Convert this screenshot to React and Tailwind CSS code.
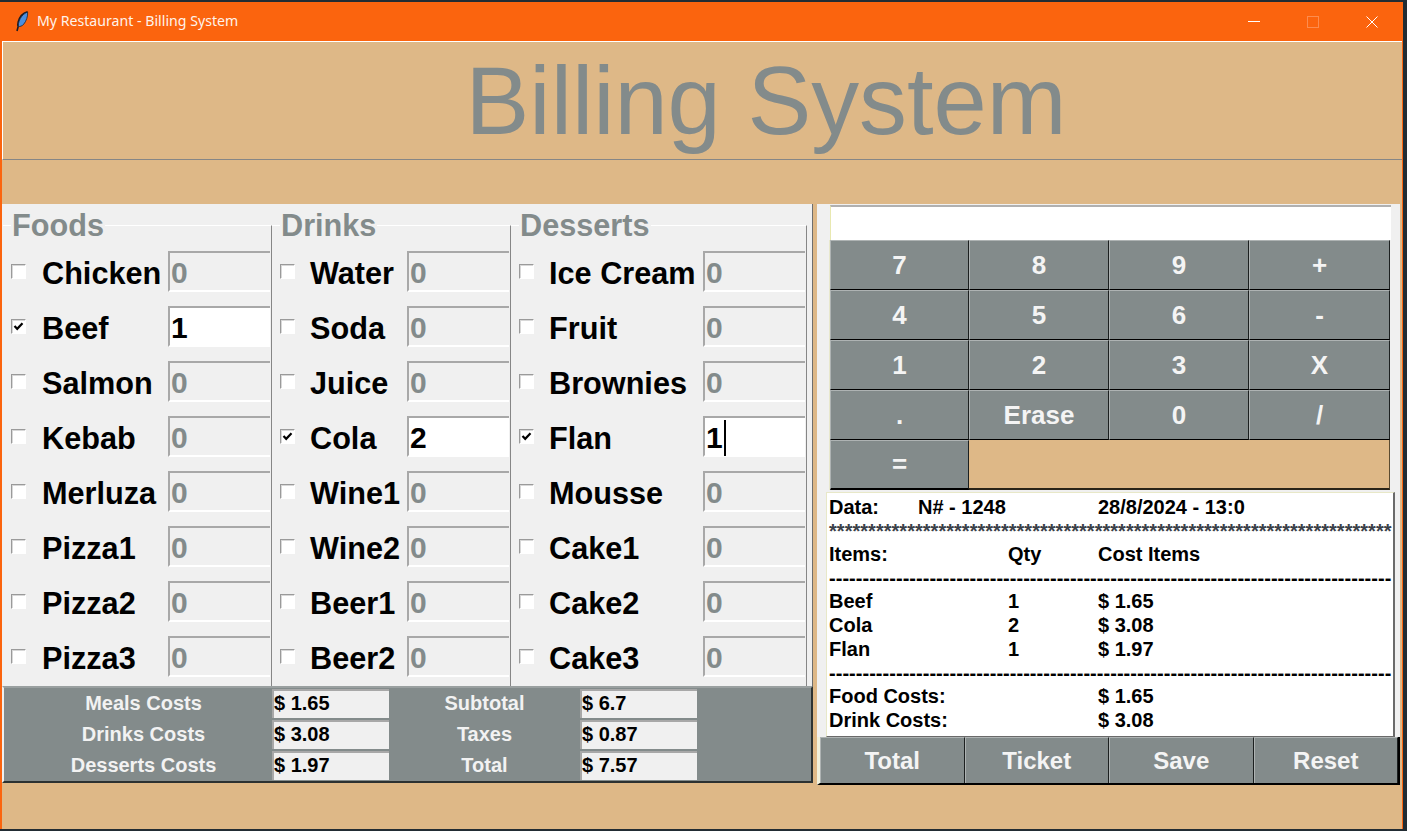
const foods = [["Chicken", ""], ["Beef", "1"], ["Salmon", ""], ["Kebab", ""], ["Merluza", ""], ["Pizza1", ""], ["Pizza2", ""], ["Pizza3", ""]];
const drinks = [["Water", ""], ["Soda", ""], ["Juice", ""], ["Cola", "2"], ["Wine1", ""], ["Wine2", ""], ["Beer1", ""], ["Beer2", ""]];
const desserts = [["Ice Cream", ""], ["Fruit", ""], ["Brownies", ""], ["Flan", "1"], ["Mousse", ""], ["Cake1", ""], ["Cake2", ""], ["Cake3", ""]];
const keys = ["7", "8", "9", "+", "4", "5", "6", "-", "1", "2", "3", "X", ".", "Erase", "0", "/", "="];

function Feather() {
  return (
    <svg width="14" height="21" viewBox="0 0 14 21">
      <path d="M12.5 0.8C8 2 4.5 6 3.2 11C2.7 13 2.8 14.5 3.2 15.5L2 20" fill="none" stroke="#1c1c24" strokeWidth="1.6" />
      <path d="M12.6 1C13 5 11.5 10 8.5 13.5C7 15 5 15.8 3.4 15.4C3 12 4.5 8 7 5C8.6 3.2 10.6 1.8 12.6 1Z" fill="#4a8fe0" stroke="#15233a" strokeWidth="0.8" />
    </svg>
  );
}

function Check({ checked }) {
  return (
    <span className="flex h-[15px] w-[15px] shrink-0 items-center justify-center border border-t-[#9a9a9a] border-l-[#9a9a9a] border-r-white border-b-white bg-white shadow-[inset_1px_1px_0_#d8d8d8]">
      {checked && (
        <svg width="11" height="9" viewBox="0 0 11 9">
          <path d="M1.5 4L4.2 6.8L9.5 1.2" fill="none" stroke="#000" strokeWidth="2.2" />
        </svg>
      )}
    </span>
  );
}

function ItemRow({ name, value, caret, gap }) {
  const on = value !== "";
  return (
    <div className="flex h-[41px] items-center">
      <Check checked={on} />
      <span className={`flex-1 whitespace-nowrap pt-[4px] text-[30.67px] leading-none font-bold text-black ${gap}`}>{name}</span>
      <div className={`mr-px flex h-[41px] w-[102px] items-center border-t-2 border-b-2 border-l-2 border-t-[#a8a8a8] border-b-white border-l-[#a8a8a8] pt-[2px] pl-px text-[30px] leading-none font-bold ${on ? "bg-white text-black" : "bg-[#f0f0f0] text-[#838b8b]"}`}>
        {on ? value : "0"}
        {caret && <span className="ml-px inline-block h-[36px] w-[2px] bg-black" />}
      </div>
    </div>
  );
}

function Group({ title, items, width, gap, caretOn }) {
  return (
    <div className={`mt-[21px] flex flex-col self-stretch border-t border-r border-t-white border-r-[#868686] ${width}`}>
      <div className="mt-[-22px] ml-[8px] w-fit bg-[#f0f0f0] px-px text-[30.67px] leading-[42px] font-bold text-[#838b8b]">{title}</div>
      <div className="flex flex-col gap-[14px] pt-[5px] pl-[8px]">
        {items.map(([name, value]) => (
          <ItemRow key={name} name={name} value={value} gap={gap} caret={name === caretOn} />
        ))}
      </div>
    </div>
  );
}

function CostRow({ label, labelWidth, value }) {
  return (
    <div className="flex items-center">
      <div className={`pb-[2px] text-center text-[20px] leading-none font-bold text-[#f2f2f2] ${labelWidth}`}>{label}</div>
      <div className="flex h-[29px] w-[117px] items-center border-t-2 border-l-2 border-t-[#a8a8a8] border-l-[#a8a8a8] bg-[#f0f0f0] pb-[4px] text-[20px] leading-none font-bold text-black">{value}</div>
    </div>
  );
}

function Key({ label, size, edge }) {
  return (
    <button className={`flex items-center justify-center border-t border-r border-l border-t-[#aeb3b3] border-r-[#1c2020] border-b-black border-l-[#aeb3b3] bg-[#838b8b] font-bold text-[#f4f4f4] ${size} ${edge}`}>
      {label}
    </button>
  );
}

function ReceiptRow({ cols }) {
  return (
    <div className="flex h-[24px] items-center whitespace-nowrap">
      <span className="w-[89px]">{cols[0]}</span>
      <span className="w-[90px]">{cols[1]}</span>
      <span className="w-[90px]">{cols[2]}</span>
      <span>{cols[3]}</span>
    </div>
  );
}

function Filler({ ch, count, tone }) {
  return <div className={`h-[23px] whitespace-nowrap ${tone}`}>{ch.repeat(count)}</div>;
}

export default function App() {
  return (
    <div className="h-[831px] w-[1407px] overflow-hidden bg-[#222c33] pt-[2px] font-['Liberation_Sans',_Arial,_sans-serif]">
      <div className="flex h-[827px] w-[1403px] flex-col border-r border-l-2 border-[#fb640e] bg-[#deb887]">
        <div className="flex h-[39px] shrink-0 items-center bg-[#fb640e] font-['Noto_Sans',_sans-serif] text-[14.15px] text-[#fff3ea]">
          <span className="ml-[13px] flex w-[22px]"><Feather /></span>
          <span className="flex-1 pb-[2px]">My Restaurant - Billing System</span>
          <div className="mr-px flex">
            <div className="flex h-[39px] w-[59px] items-center justify-center">
              <div className="h-px w-[12px] bg-white" />
            </div>
            <div className="flex h-[39px] w-[59px] items-center justify-center">
              <div className="h-[12px] w-[12px] border border-[#fd8c4e]" />
            </div>
            <div className="flex h-[39px] w-[59px] items-center justify-center">
              <svg width="12" height="12" viewBox="0 0 12 12">
                <path d="M0.5 0.5L11.5 11.5M11.5 0.5L0.5 11.5" stroke="#fff" strokeWidth="1" fill="none" />
              </svg>
            </div>
          </div>
        </div>

        <div className="flex h-[119px] shrink-0 items-center justify-center border-t border-b border-l border-t-white border-b-[#868686] border-l-white pl-[127px]">
          <h1 className="text-[95.7px] leading-none font-normal text-[#838b8b]">Billing System</h1>
        </div>

        <div className="mt-[44px] flex items-start">
          <div className="flex w-[811px] shrink-0 flex-col">
            <div className="flex h-[482px] border-r border-r-[#6e6e6e] bg-[#f0f0f0] pl-px">
              <Group title="Foods" items={foods} width="w-[269px]" gap="ml-[16px]" />
              <Group title="Drinks" items={drinks} width="w-[239px]" gap="ml-[15px]" />
              <Group title="Desserts" items={desserts} width="w-[296px]" gap="ml-[15px]" caretOn="Flan" />
            </div>
            <div className="flex h-[97px] border-t-2 border-r-2 border-b-2 border-l-2 border-t-[#9aa0a0] border-r-[#2c3232] border-b-[#2c3232] border-l-[#f0f0f0] bg-[#838b8b] pt-px">
              <div className="flex flex-col gap-[2px] pl-[11px]">
                <CostRow label="Meals Costs" labelWidth="w-[257px]" value="$ 1.65" />
                <CostRow label="Drinks Costs" labelWidth="w-[257px]" value="$ 3.08" />
                <CostRow label="Desserts Costs" labelWidth="w-[257px]" value="$ 1.97" />
              </div>
              <div className="flex flex-col gap-[2px]">
                <CostRow label="Subtotal" labelWidth="w-[191px]" value="$ 6.7" />
                <CostRow label="Taxes" labelWidth="w-[191px]" value="$ 0.87" />
                <CostRow label="Total" labelWidth="w-[191px]" value="$ 7.57" />
              </div>
            </div>
          </div>

          <div className="ml-[4px] flex w-[583px] shrink-0 flex-col">
            <div className="flex h-[533px] flex-col bg-[#f0f0f0]">
              <div className="ml-[12px] w-[562px] pt-px">
                <div className="ml-px h-[35px] border-t-2 border-l border-t-[#b0b0b0] border-l-[#e8e8b0] bg-white" />
                <div className="grid grid-cols-[139px_140px_140px_141px] grid-rows-[repeat(5,50px)] border-l border-l-[#e8e8cc]">
                  {keys.map((k) => (
                    <Key key={k} label={k} size="text-[26px]" edge={k === "=" ? "border-b-2" : "border-b"} />
                  ))}
                  <div className="col-span-3 border-r border-b-2 border-r-[#5a4a30] border-b-[#2a2418] bg-[#deb887]" />
                </div>
              </div>
              <div className="mt-[2px] ml-[9px] h-[245px] w-[569px] overflow-hidden border-t border-r-2 border-b border-l border-t-[#e8e8c8] border-r-[#6a6a6a] border-b-[#6a6a6a] border-l-[#e8e8c8] bg-white pt-[2px] pl-[2px] text-[20px] leading-[24px] font-bold text-black">
                <ReceiptRow cols={["Data:", "N# - 1248", "", "28/8/2024 - 13:0"]} />
                <Filler ch="*" count={72} tone="tracking-[0.03px] text-[#3a4048]" />
                <ReceiptRow cols={["Items:", "", "Qty", "Cost Items"]} />
                <Filler ch="-" count={84} tone="tracking-[0.035px] text-black" />
                <ReceiptRow cols={["Beef", "", "1", "$ 1.65"]} />
                <ReceiptRow cols={["Cola", "", "2", "$ 3.08"]} />
                <ReceiptRow cols={["Flan", "", "1", "$ 1.97"]} />
                <Filler ch="-" count={84} tone="tracking-[0.035px] text-black" />
                <ReceiptRow cols={["Food Costs:", "", "", "$ 1.65"]} />
                <ReceiptRow cols={["Drink Costs:", "", "", "$ 3.08"]} />
              </div>
            </div>
            <div className="grid h-[48px] grid-cols-4 border-r-2 border-b-2 border-l-[3px] border-r-black border-b-black border-l-[#f0f0dc]">
              {["Total", "Ticket", "Save", "Reset"].map((k) => (
                <Key key={k} label={k} size="text-[24px]" edge="border-b-0" />
              ))}
            </div>
          </div>
        </div>
      </div>
    </div>
  );
}
